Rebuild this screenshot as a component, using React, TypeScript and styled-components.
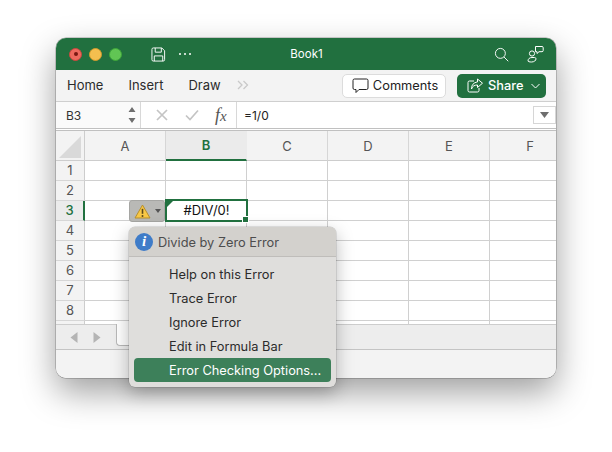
import React from "react";
import styled, { createGlobalStyle } from "styled-components";

const GlobalStyle = createGlobalStyle`
  html, body {
    margin: 0;
    padding: 0;
    background: #fff;
    overflow: hidden;
  }
  body {
    font-family: "Inter", "Liberation Sans", sans-serif;
  }
`;

const COLUMNS = ["A", "B", "C", "D", "E", "F"];
const ROWS = [1, 2, 3, 4, 5, 6, 7, 8];
const MENU_ITEMS = [
  "Help on this Error",
  "Trace Error",
  "Ignore Error",
  "Edit in Formula Bar",
  "Error Checking Options...",
];

const App: React.FC = () => {
  return (
    <Page>
      <GlobalStyle />
      <Window>
        <TitleBar>
          <Lights>
            <Light color="#ed6a5e" edge="#c9483f">
              <i />
            </Light>
            <Light color="#f4bf4f" edge="#d29a2d" />
            <Light color="#61c554" edge="#3ea53a" />
          </Lights>
          <SaveIcon>
            <svg width="15" height="15" viewBox="0 0 16 16" fill="none" stroke="#fff" strokeWidth="1">
              <path d="M2.500 1h9l3 3v9.500a1.500 1.500 0 0 1-1.500 1.500h-10.500a1.500 1.500 0 0 1-1.500-1.500v-11a1.500 1.500 0 0 1 1.500-1.500z" />
              <path d="M4.500 1v4.500h6.500v-4.500M3.500 15v-5.500h9v5.500" />
            </svg>
          </SaveIcon>
          <Dots>
            <i />
            <i />
            <i />
          </Dots>
          <Title>Book1</Title>
          <SearchIcon>
            <svg width="15" height="15" viewBox="0 0 16 16" fill="none" stroke="#fff" strokeWidth="1">
              <circle cx="6.800" cy="6.800" r="5.300" />
              <path d="M10.700 10.700l4.500 4.500" />
            </svg>
          </SearchIcon>
          <PeopleIcon>
            <svg width="17" height="18" viewBox="0 0 17 18" fill="none" stroke="#fff" strokeWidth="1">
              <circle cx="5" cy="8.500" r="2.600" />
              <path d="M1 16c0-2.200 1.600-3.500 4-3.500h2.500c.8 0 1.500.5 1.500 1.300 0 1.700-1.800 3.200-4.500 3.200-2 0-3.500-.4-3.500-1z" />
              <path d="M8.500 1.500h6.500a1.200 1.200 0 0 1 1.200 1.200v2.800a1.200 1.200 0 0 1-1.200 1.200h-3l-2 1.800v-1.800h-1.500z" />
            </svg>
          </PeopleIcon>
        </TitleBar>

        <Ribbon>
          <Tab>Home</Tab>
          <Tab>Insert</Tab>
          <Tab>Draw</Tab>
          <Chevrons>
            <svg width="12" height="10" viewBox="0 0 12 10" fill="none" stroke="#c9c9c9" strokeWidth="1.300">
              <path d="M1 1l4 4-4 4M6.500 1l4 4-4 4" />
            </svg>
          </Chevrons>
          <Spacer />
          <CommentsButton>
            <svg width="17" height="16" viewBox="0 0 17 16" fill="none" stroke="#222" strokeWidth="1">
              <path d="M2.500 1h12a1.500 1.500 0 0 1 1.500 1.500v7.500a1.500 1.500 0 0 1-1.500 1.500h-7.500l-3 3v-3h-1.500a1.500 1.500 0 0 1-1.500-1.500v-7.500a1.500 1.500 0 0 1 1.500-1.500z" />
            </svg>
            Comments
          </CommentsButton>
          <ShareButton>
            <svg width="16" height="16" viewBox="0 0 16 16" fill="none" stroke="#fff" strokeWidth="1">
              <path d="M7 3h-4.500a1.500 1.500 0 0 0-1.500 1.500v8a1.500 1.500 0 0 0 1.500 1.500h8a1.500 1.500 0 0 0 1.500-1.500v-2.500" />
              <path d="M10.500 1l5 4.200-5 4.300v-2.500c-3 0-5 1-6 4 0-4 2-6.500 6-7z" />
            </svg>
            Share
            <ShareCaret>
              <svg width="9" height="6" viewBox="0 0 9 6" fill="none" stroke="#fff" strokeWidth="1">
                <path d="M.5 1l4 4 4-4" />
              </svg>
            </ShareCaret>
          </ShareButton>
        </Ribbon>

        <FormulaBar>
          <NameBox>
            B3
            <Stepper>
              <svg width="8" height="16" viewBox="0 0 8 16" fill="#6e6e6e">
                <path d="M4 0l3.500 5h-7zM4 16l3.500-5h-7z" />
              </svg>
            </Stepper>
          </NameBox>
          <FormulaActions>
            <svg width="12" height="12" viewBox="0 0 12 12" fill="none" stroke="#c4c4c4" strokeWidth="1.700">
              <path d="M1 1l10 10M11 1l-10 10" />
            </svg>
            <CheckMark>
              <svg width="14" height="12" viewBox="0 0 14 12" fill="none" stroke="#c4c4c4" strokeWidth="1.700">
                <path d="M1 6.500l4 4 8-9" />
              </svg>
            </CheckMark>
            <Fx>
              f<span>x</span>
            </Fx>
          </FormulaActions>
          <FormulaInput>=1/0</FormulaInput>
          <ExpandButton>
            <svg width="9" height="6" viewBox="0 0 9 6" fill="#6e6e6e">
              <path d="M0 0h9l-4.500 6z" />
            </svg>
          </ExpandButton>
        </FormulaBar>

        <Sheet>
          <Corner>
            <svg width="22" height="22" viewBox="0 0 22 22" fill="#d9d9d9">
              <path d="M22 0v22h-22z" />
            </svg>
          </Corner>
          {COLUMNS.map((c) => (
            <ColumnHead key={c} active={c === "B"}>
              {c}
            </ColumnHead>
          ))}
          {ROWS.map((r) => (
            <React.Fragment key={r}>
              <RowHead active={r === 3}>{r}</RowHead>
              {COLUMNS.map((c) => (
                <Cell key={c}>
                  {c === "B" && r === 3 && (
                    <SelectedCell>
                      <ErrorFlag />
                      #DIV/0!
                      <Handle />
                    </SelectedCell>
                  )}
                </Cell>
              ))}
            </React.Fragment>
          ))}
          <RowHead />
          {COLUMNS.map((c) => (
            <Cell key={c} />
          ))}
        </Sheet>

        <TabsBar>
          <NavArrows>
            <svg width="8" height="11" viewBox="0 0 8 11" fill="#b4b4b4">
              <path d="M7.500 0v11l-7-5.500z" />
            </svg>
            <svg width="8" height="11" viewBox="0 0 8 11" fill="#b4b4b4">
              <path d="M.5 0v11l7-5.500z" />
            </svg>
          </NavArrows>
          <SheetTab />
        </TabsBar>
        <StatusBar />
      </Window>

      <WarningButton>
        <svg width="17" height="15" viewBox="0 0 17 15">
          <path d="M8.500 1l7.500 13h-15z" fill="#f8c846" stroke="#b8902c" strokeWidth="1" strokeLinejoin="round" />
          <path d="M8.500 4.800v5" stroke="#5b4a1c" strokeWidth="1.600" />
          <circle cx="8.500" cy="12" r="1" fill="#5b4a1c" />
        </svg>
        <svg width="6" height="4" viewBox="0 0 6 4" fill="#555">
          <path d="M0 0h6l-3 4z" />
        </svg>
      </WarningButton>

      <Menu>
        <MenuHeader>
          <InfoBadge>i</InfoBadge>
          <MenuTitle>Divide by Zero Error</MenuTitle>
        </MenuHeader>
        <MenuList>
          {MENU_ITEMS.map((item, i) => (
            <MenuItem key={item} selected={i === MENU_ITEMS.length - 1}>
              {item}
            </MenuItem>
          ))}
        </MenuList>
      </Menu>
    </Page>
  );
};

const Page = styled.div`
  position: relative;
  width: 612px;
  height: 452px;
  padding: 38px 0 0 56px;
  box-sizing: border-box;
  overflow: hidden;
`;

const Window = styled.div`
  width: 500px;
  height: 340px;
  border-radius: 10px;
  overflow: hidden;
  display: flex;
  flex-direction: column;
  background: #f3f3f3;
  box-shadow: 0 0 0 0.5px rgba(0, 0, 0, 0.35), 0 14px 34px rgba(0, 0, 0, 0.38);
`;

const TitleBar = styled.div`
  height: 32px;
  flex: none;
  display: flex;
  align-items: center;
  padding-left: 13px;
  background: #21703f;
`;

const Lights = styled.div`
  display: flex;
  gap: 7px;
`;

const Light = styled.div<{ color: string; edge: string }>`
  width: 13px;
  height: 13px;
  box-sizing: border-box;
  border-radius: 50%;
  background: ${(p) => p.color};
  border: 0.5px solid ${(p) => p.edge};
  display: flex;
  align-items: center;
  justify-content: center;
  i {
    width: 4px;
    height: 4px;
    border-radius: 50%;
    background: #7a1712;
  }
`;

const SaveIcon = styled.div`
  display: flex;
  flex: none;
  margin-left: 29px;
`;

const SearchIcon = styled.div`
  display: flex;
  flex: none;
`;

const PeopleIcon = styled.div`
  display: flex;
  flex: none;
  margin-left: 18px;
  margin-right: 12px;
`;

const Dots = styled.div`
  display: flex;
  gap: 3px;
  margin-left: 13px;
  i {
    width: 2px;
    height: 2px;
    border-radius: 50%;
    background: #fff;
  }
`;

const Title = styled.div`
  flex: 1;
  padding-right: 72px;
  text-align: center;
  color: #fff;
  font-size: 11.500px;
  font-weight: 400;
`;

const Ribbon = styled.div`
  height: 32px;
  flex: none;
  box-sizing: border-box;
  display: flex;
  align-items: center;
  padding: 0 10px 0 11px;
  background: #f3f3f3;
  border-bottom: 1px solid #cfcfcf;
`;

const Tab = styled.div`
  font-size: 13px;
  color: #2b2b2b;
  margin-right: 25px;
  margin-bottom: 2px;
  &:nth-child(3) {
    margin-right: 16px;
  }
`;

const Chevrons = styled.div`
  display: flex;
  margin-bottom: 2px;
`;

const Spacer = styled.div`
  flex: 1;
`;

const CommentsButton = styled.div`
  width: 104px;
  height: 24px;
  box-sizing: border-box;
  padding-left: 2px;
  display: flex;
  align-items: center;
  justify-content: center;
  gap: 4px;
  background: #fff;
  border: 1px solid #dcdcdc;
  border-radius: 5px;
  font-size: 12.800px;
  color: #222;
`;

const ShareButton = styled.div`
  width: 89px;
  height: 24px;
  margin-left: 11px;
  box-sizing: border-box;
  padding-left: 10px;
  display: flex;
  align-items: center;
  gap: 5px;
  background: #21703f;
  border-radius: 5px;
  font-size: 12.800px;
  font-weight: 500;
  color: #fff;
`;

const ShareCaret = styled.span`
  display: flex;
  margin-left: 3px;
`;

const FormulaBar = styled.div`
  height: 29px;
  flex: none;
  box-sizing: border-box;
  display: flex;
  align-items: center;
  background: #fff;
  border-bottom: 3px double #c0c0c0;
`;

const NameBox = styled.div`
  width: 85px;
  height: 26px;
  flex: none;
  box-sizing: border-box;
  display: flex;
  align-items: center;
  justify-content: space-between;
  padding: 0 4px 0 10px;
  background: #fafafa;
  border-right: 1px solid #d8d8d8;
  font-size: 12px;
  color: #333;
`;

const Stepper = styled.div`
  display: flex;
`;

const FormulaActions = styled.div`
  width: 95px;
  flex: none;
  box-sizing: border-box;
  padding-left: 15px;
  display: flex;
  align-items: center;
`;

const CheckMark = styled.span`
  display: flex;
  margin-left: 17px;
`;

const Fx = styled.div`
  margin-left: 16px;
  font-family: "Liberation Serif", serif;
  font-style: italic;
  font-size: 18px;
  color: #555;
  span {
    font-size: 15px;
  }
`;

const FormulaInput = styled.div`
  flex: 1;
  height: 100%;
  display: flex;
  align-items: center;
  padding-left: 7px;
  border-left: 1px solid #d8d8d8;
  font-size: 12px;
  color: #222;
`;

const ExpandButton = styled.div`
  width: 23px;
  height: 18px;
  flex: none;
  display: flex;
  align-items: center;
  justify-content: center;
  background: #fff;
  border: 1px solid #d6d6d6;
  box-sizing: border-box;
`;

const Sheet = styled.div`
  flex: 1;
  display: grid;
  grid-template-columns: 29px repeat(6, 81px);
  grid-template-rows: 30px repeat(8, 20px) 4px;
  overflow: hidden;
  background: #fff;
`;

const Corner = styled.div`
  display: flex;
  align-items: flex-end;
  justify-content: flex-end;
  padding: 0 3px 2px 0;
  box-sizing: border-box;
  background: #f3f3f3;
  border-right: 1px solid #cdcdcd;
  border-bottom: 1px solid #cdcdcd;
  overflow: hidden;
`;

const ColumnHead = styled.div<{ active?: boolean }>`
  display: flex;
  align-items: center;
  justify-content: center;
  box-sizing: border-box;
  background: ${(p) => (p.active ? "#ebebeb" : "#f3f3f3")};
  color: ${(p) => (p.active ? "#21703f" : "#555")};
  font-weight: ${(p) => (p.active ? 600 : 400)};
  font-size: 13px;
  border-right: 1px solid ${(p) => (p.active ? "#ebebeb" : "#d6d6d6")};
  border-bottom: ${(p) => (p.active ? "2px solid #21703f" : "1px solid #cdcdcd")};
`;

const RowHead = styled.div<{ active?: boolean }>`
  display: flex;
  align-items: center;
  justify-content: center;
  box-sizing: border-box;
  padding-bottom: 1px;
  overflow: hidden;
  background: ${(p) => (p.active ? "#ebebeb" : "#f3f3f3")};
  color: ${(p) => (p.active ? "#21703f" : "#555")};
  font-weight: ${(p) => (p.active ? 500 : 400)};
  font-size: 13px;
  border-bottom: 1px solid #d6d6d6;
  border-right: ${(p) => (p.active ? "2px solid #21703f" : "1px solid #cdcdcd")};
`;

const Cell = styled.div`
  position: relative;
  box-sizing: border-box;
  border-right: 1px solid #d0d0d0;
  border-bottom: 1px solid #d0d0d0;
`;

const SelectedCell = styled.div`
  position: absolute;
  top: -2px;
  left: -1px;
  width: 83px;
  height: 23px;
  box-sizing: border-box;
  padding-bottom: 1px;
  z-index: 2;
  display: flex;
  align-items: center;
  justify-content: center;
  background: #fff;
  border: 2px solid #21703f;
  font-size: 13px;
  color: #111;
`;

const ErrorFlag = styled.div`
  position: absolute;
  top: 0;
  left: 0;
  width: 0;
  height: 0;
  border-top: 6px solid #21703f;
  border-right: 6px solid transparent;
`;

const Handle = styled.div`
  position: absolute;
  right: -3px;
  bottom: -3px;
  width: 5px;
  height: 5px;
  background: #21703f;
  border: 0.5px solid #fff;
`;

const TabsBar = styled.div`
  height: 26px;
  flex: none;
  box-sizing: border-box;
  display: flex;
  background: #ededed;
  border-top: 1px solid #cdcdcd;
  border-bottom: 1px solid #c4c4c4;
`;

const NavArrows = styled.div`
  width: 60px;
  flex: none;
  display: flex;
  align-items: center;
  gap: 15px;
  padding-left: 14px;
  box-sizing: border-box;
`;

const SheetTab = styled.div`
  width: 60px;
  height: 22px;
  margin-top: -1px;
  box-sizing: border-box;
  background: #fff;
  border-left: 1px solid #b8b8b8;
  border-bottom: 1px solid #b8b8b8;
  border-radius: 0 0 0 4px;
`;

const StatusBar = styled.div`
  height: 28px;
  flex: none;
  background: #f3f3f3;
`;

const WarningButton = styled.div`
  position: absolute;
  left: 129px;
  top: 200px;
  width: 36px;
  height: 22px;
  box-sizing: border-box;
  display: flex;
  align-items: center;
  justify-content: center;
  gap: 4px;
  background: #b9b9b6;
  border: 1px solid #a6a6a3;
  border-radius: 3px;
`;

const Menu = styled.div`
  position: absolute;
  left: 129px;
  top: 227px;
  width: 207px;
  height: 160px;
  border-radius: 6px;
  overflow: hidden;
  background: #dfdedc;
  box-shadow: 0 0 0 0.5px rgba(0, 0, 0, 0.18), 0 6px 18px rgba(0, 0, 0, 0.28);
`;

const MenuHeader = styled.div`
  height: 30px;
  box-sizing: border-box;
  display: flex;
  align-items: center;
  gap: 5px;
  padding-left: 6px;
  background: #d3d1cd;
  border-bottom: 1px solid #bfbdba;
  font-size: 12.800px;
  color: #4d4d4d;
`;

const MenuTitle = styled.span`
  padding-top: 2px;
`;

const InfoBadge = styled.div`
  width: 18px;
  height: 18px;
  border-radius: 50%;
  background: #3f7cc8;
  color: #fff;
  display: flex;
  align-items: center;
  justify-content: center;
  font-family: "Liberation Serif", serif;
  font-style: italic;
  font-weight: 700;
  font-size: 15px;
`;

const MenuList = styled.div`
  display: flex;
  flex-direction: column;
  padding: 5px 5px 0;
`;

const MenuItem = styled.div<{ selected?: boolean }>`
  height: 24px;
  display: flex;
  align-items: center;
  padding-left: 35px;
  border-radius: 4px;
  font-size: 12.800px;
  color: ${(p) => (p.selected ? "#fff" : "#2b2b2b")};
  background: ${(p) => (p.selected ? "#3d805a" : "transparent")};
`;

export default App;
